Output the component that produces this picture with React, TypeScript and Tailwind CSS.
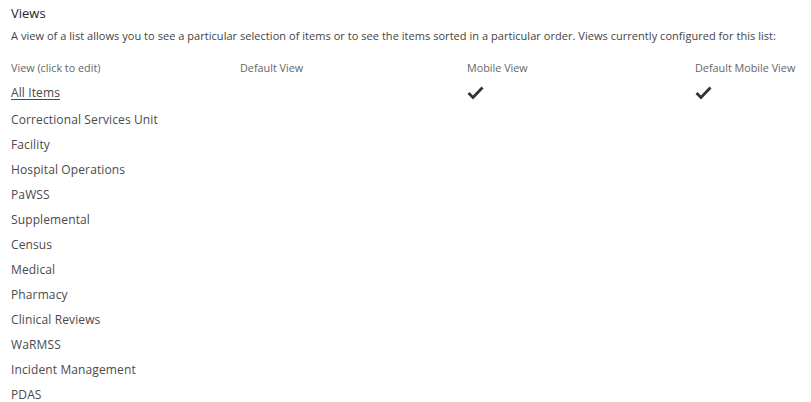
import React from "react";

const views = [
  { name: "All Items", current: true, mobile: true, defaultMobile: true },
  { name: "Correctional Services Unit" },
  { name: "Facility" },
  { name: "Hospital Operations" },
  { name: "PaWSS" },
  { name: "Supplemental" },
  { name: "Census" },
  { name: "Medical" },
  { name: "Pharmacy" },
  { name: "Clinical Reviews" },
  { name: "WaRMSS" },
  { name: "Incident Management" },
  { name: "PDAS" },
];

function Check() {
  return (
    <svg width="17" height="14" viewBox="0 0 17 14" className="text-[#333]">
      <path d="M1.5 7 L6 11.5 L15.5 1.5" fill="none" stroke="currentColor" strokeWidth="2.8" />
    </svg>
  );
}

export default function App() {
  return (
    <div
      className="h-[402px] w-[811px] overflow-hidden bg-white pl-[11px] pt-[3px]"
      style={{ fontFamily: '"Open Sans", "Noto Sans", sans-serif' }}
    >
      <h2 className="text-[13px] leading-[20px] text-[#262626]">Views</h2>
      <p className="mt-[4px] whitespace-nowrap text-[11px] tracking-[0.04px] leading-[18px] text-[#444]">
        A view of a list allows you to see a particular selection of items or to see the items sorted in a particular order. Views currently configured for this list:
      </p>
      <div className="mt-[15px] grid grid-cols-[229px_227px_228px_1fr] text-[#666] text-[10.8px] leading-[16px]">
        <div>View (click to edit)</div>
        <div>Default View</div>
        <div>Mobile View</div>
        <div>Default Mobile View</div>
      </div>
      <div className="mt-[3px] flex flex-col">
        {views.map((v, i) => (
          <div
            key={v.name}
            className={`grid grid-cols-[229px_227px_228px_1fr] items-center text-[12px] tracking-[0.12px] text-[#4a4a4a] ${i === 0 ? "h-[28px]" : "h-[25px]"}`}
          >
            <div className={v.current ? "underline underline-offset-2" : ""}>{v.name}</div>
            <div></div>
            <div className="flex">{v.mobile && <Check />}</div>
            <div className="flex">{v.defaultMobile && <Check />}</div>
          </div>
        ))}
      </div>
    </div>
  );
}
